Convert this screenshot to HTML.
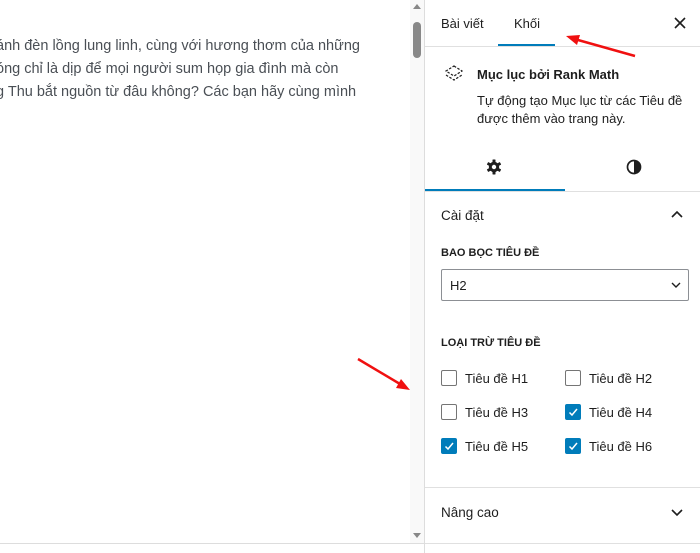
<!DOCTYPE html>
<html><head><meta charset="utf-8"><style>
*{margin:0;padding:0;box-sizing:border-box}
body{width:700px;height:553px;overflow:hidden;background:#fff;font-family:"Liberation Sans",sans-serif;color:#1e1e1e;position:relative}
.a{position:absolute;white-space:nowrap}
.txt{font-size:14.5px;color:#4a4f55;left:-4px}
.sb{position:absolute;left:410px;top:0;width:14px;height:544px;background:#f9f9f9}
.cb{position:absolute;width:16px;height:16px;border:1px solid #757575;border-radius:2px;background:#fff}
.cb.on{background:#007cba;border-color:#007cba}
.lab{font-size:13px;color:#1e1e1e}
.hr{position:absolute;left:425px;width:275px;height:1px;background:#e0e0e0}
</style></head><body>
<div class="a txt" style="top:38px">ánh đèn lồng lung linh, cùng với hương thơm của những</div>
<div class="a txt" style="top:61px">óng chỉ là dịp để mọi người sum họp gia đình mà còn</div>
<div class="a txt" style="top:84px">g Thu bắt nguồn từ đâu không? Các bạn hãy cùng mình</div>
<div class="sb"></div>
<div class="a" style="left:413px;top:4px;width:0;height:0;border-left:4px solid transparent;border-right:4px solid transparent;border-bottom:5px solid #888"></div>
<div class="a" style="left:413px;top:22px;width:8px;height:36px;background:#888;border-radius:4px"></div>
<div class="a" style="left:413px;top:533px;width:0;height:0;border-left:4px solid transparent;border-right:4px solid transparent;border-top:5px solid #888"></div>
<div class="a" style="left:424px;top:0;width:1px;height:553px;background:#ddd"></div>
<div class="a" style="left:0;top:543px;width:425px;height:1px;background:#ddd"></div>

<div class="a lab" style="left:441px;top:16px">Bài viết</div>
<div class="a lab" style="left:514px;top:16px">Khối</div>
<div class="a" style="left:498px;top:44px;width:57px;height:2px;background:#007cba"></div>
<svg class="a" style="left:674px;top:17px" width="12" height="12"><path d="M1 1L11 11M11 1L1 11" stroke="#1e1e1e" stroke-width="1.6"/></svg>
<div class="hr" style="top:46px"></div>

<svg class="a" style="left:443px;top:64px" width="22" height="20" viewBox="0 0 22 20"><path d="M11 2L19 7L11 12L3 7Z M3 11L11 16L19 11" fill="none" stroke="#1e1e1e" stroke-width="1.2" stroke-dasharray="2.5 1.5"/></svg>
<div class="a" style="left:477px;top:67px;font-size:13px;font-weight:600;color:#1e1e1e">Mục lục bởi Rank Math</div>
<div class="a lab" style="left:477px;top:93px">Tự động tạo Mục lục từ các Tiêu đề</div>
<div class="a lab" style="left:477px;top:111px">được thêm vào trang này.</div>

<svg class="a" style="left:486px;top:159px" width="16" height="16" viewBox="0 0 16 16"><g fill="#1e1e1e"><circle cx="8" cy="8" r="5.2"/><rect x="6.5" y="0.5" width="3" height="15" rx=".5"/><rect x="6.5" y="0.5" width="3" height="15" rx=".5" transform="rotate(60 8 8)"/><rect x="6.5" y="0.5" width="3" height="15" rx=".5" transform="rotate(120 8 8)"/></g><circle cx="8" cy="8" r="2.2" fill="#fff"/></svg>
<svg class="a" style="left:626px;top:159px" width="16" height="16" viewBox="0 0 16 16"><circle cx="8" cy="8" r="6.5" fill="none" stroke="#1e1e1e" stroke-width="1.7"/><path d="M8 1.5A6.5 6.5 0 0 1 8 14.5Z" fill="#1e1e1e"/></svg>
<div class="a" style="left:425px;top:189px;width:140px;height:2px;background:#007cba"></div>
<div class="hr" style="top:191px"></div>

<div class="a" style="left:441px;top:208px;font-size:13.5px;font-weight:500">Cài đặt</div>
<svg class="a" style="left:670px;top:209px" width="14" height="10"><path d="M2 8L7 3L12 8" fill="none" stroke="#1e1e1e" stroke-width="1.6"/></svg>
<div class="a" style="left:441px;top:247px;font-size:11px;font-weight:bold;color:#1e1e1e">BAO BỌC TIÊU ĐỀ</div>
<div class="a" style="left:441px;top:269px;width:248px;height:32px;border:1px solid #8c8f94;border-radius:2px"></div>
<div class="a lab" style="left:450px;top:278px">H2</div>
<svg class="a" style="left:671px;top:282px" width="10" height="7"><path d="M1 1L5 5L9 1" fill="none" stroke="#1e1e1e" stroke-width="1.4"/></svg>
<div class="a" style="left:441px;top:337px;font-size:11px;font-weight:bold;color:#1e1e1e">LOẠI TRỪ TIÊU ĐỀ</div>

<div class="cb" style="left:441px;top:370px"></div><div class="a lab" style="left:465px;top:371px">Tiêu đề H1</div>
<div class="cb" style="left:565px;top:370px"></div><div class="a lab" style="left:589px;top:371px">Tiêu đề H2</div>
<div class="cb" style="left:441px;top:404px"></div><div class="a lab" style="left:465px;top:405px">Tiêu đề H3</div>
<div class="cb on" style="left:565px;top:404px"><svg width="14" height="14" style="position:absolute;left:0;top:0"><path d="M3.5 7.5L6 10L11 4" fill="none" stroke="#fff" stroke-width="1.5"/></svg></div><div class="a lab" style="left:589px;top:405px">Tiêu đề H4</div>
<div class="cb on" style="left:441px;top:438px"><svg width="14" height="14" style="position:absolute;left:0;top:0"><path d="M3.5 7.5L6 10L11 4" fill="none" stroke="#fff" stroke-width="1.5"/></svg></div><div class="a lab" style="left:465px;top:439px">Tiêu đề H5</div>
<div class="cb on" style="left:565px;top:438px"><svg width="14" height="14" style="position:absolute;left:0;top:0"><path d="M3.5 7.5L6 10L11 4" fill="none" stroke="#fff" stroke-width="1.5"/></svg></div><div class="a lab" style="left:589px;top:439px">Tiêu đề H6</div>

<div class="hr" style="top:487px"></div>
<div class="a" style="left:441px;top:505px;font-size:13.5px;font-weight:500">Nâng cao</div>
<svg class="a" style="left:670px;top:508px" width="14" height="10"><path d="M2 2L7 7L12 2" fill="none" stroke="#1e1e1e" stroke-width="1.6"/></svg>
<div class="hr" style="top:543px"></div>

<svg class="a" style="left:0;top:0" width="700" height="553"><g stroke="#f01010" stroke-width="2.5" fill="#f01010"><line x1="635" y1="56" x2="578" y2="40"/><path d="M566 36L580 35L577 45Z" stroke="none"/><line x1="358" y1="359" x2="400" y2="384"/><path d="M410 390L396 388L401 379Z" stroke="none"/></g></svg>
</body></html>
